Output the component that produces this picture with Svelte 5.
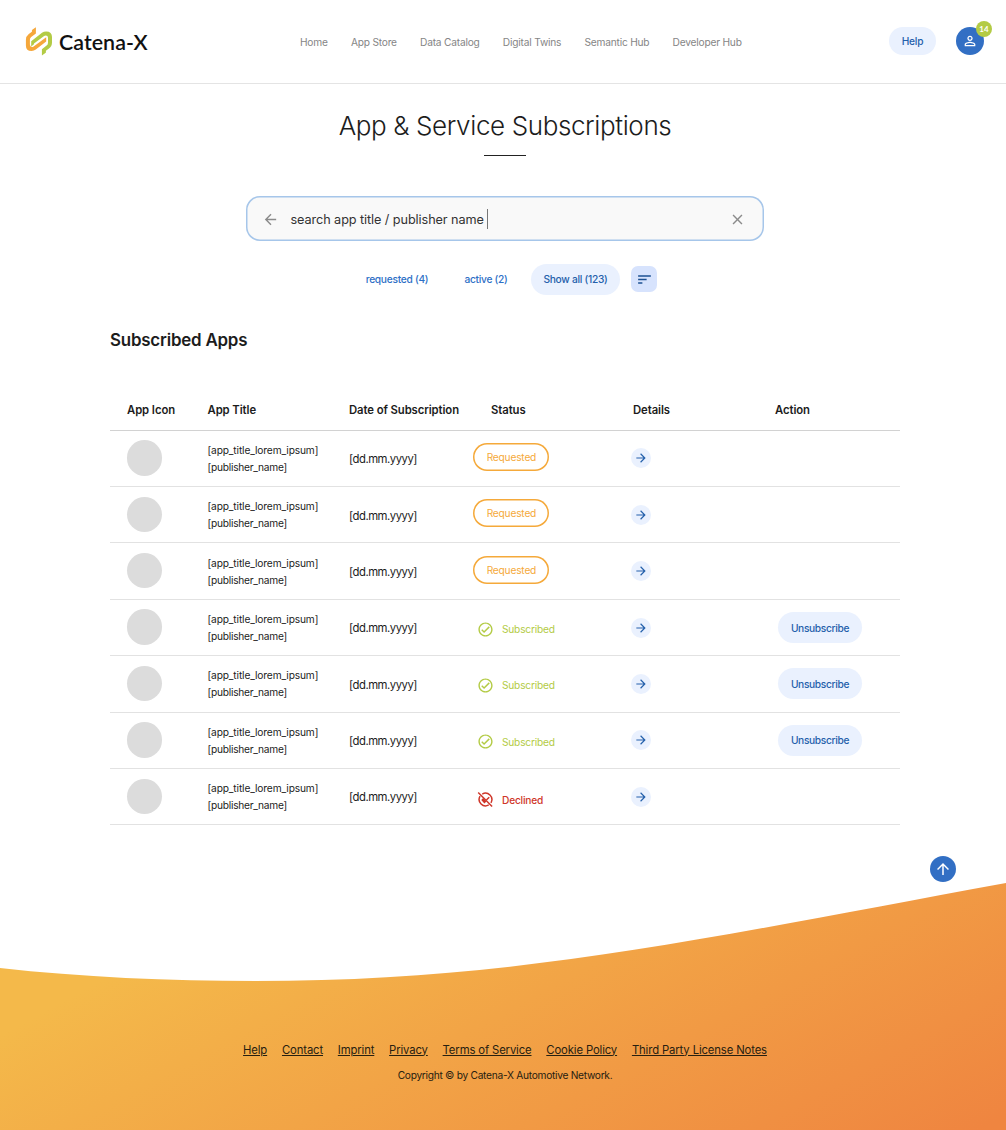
<script>
  const nav = ['Home', 'App Store', 'Data Catalog', 'Digital Twins', 'Semantic Hub', 'Developer Hub'];
  const columns = ['App Icon', 'App Title', 'Date of Subscription', 'Status', 'Details', 'Action'];
  const rows = ['requested', 'requested', 'requested', 'subscribed', 'subscribed', 'subscribed', 'declined'];
  const links = ['Help', 'Contact', 'Imprint', 'Privacy', 'Terms of Service', 'Cookie Policy', 'Third Party License Notes'];
</script>

<div class="page">
  <header>
    <div class="brand">
      <svg width="28" height="29" viewBox="0 0 28 29">
        <path d="M10.9 .2V6.4L6.2 10Q4.9 11 4.9 12.7V17.6Q4.9 20 7 20Q7.9 20 8.6 19.5L21.2 10.3V14.6L10.8 22.6Q9 24 6.6 24Q.9 24 .9 18.4V13Q.9 9.3 3.8 7.1L6.9 4.8V3.6Q6.9 2.9 7.6 2.4Z" fill="#f5a73b" />
        <path d="M16.9 28.6V22.2L21.6 18.6Q23 17.5 23 15.7V10.8Q23 8.4 20.8 8.4Q19.9 8.4 19.1 9L9 16.4V17.3L6.2 19.4V14.2L17 5.8Q18.8 4.4 21.2 4.4Q27 4.4 27 10V15.4Q27 19.2 24 21.5L20.9 23.8V25.2Q20.9 25.7 20.4 26.1Z" fill="#b3cb45" />
      </svg>
      <span>Catena-X</span>
    </div>
    <nav>{#each nav as n}<a href="#top">{n}</a>{/each}</nav>
    <div class="account">
      <button class="help">Help</button>
      <div class="avatar">
        <svg width="16" height="16" viewBox="0 0 24 24" fill="#fff"><path d="M12 5.9a2.1 2.1 0 1 1 0 4.2 2.1 2.1 0 0 1 0-4.2m0 9c2.97 0 6.1 1.46 6.1 2.1v1.1H5.9V17c0-.64 3.13-2.1 6.1-2.1M12 4C9.79 4 8 5.79 8 8s1.79 4 4 4 4-1.79 4-4-1.79-4-4-4m0 9c-2.67 0-8 1.34-8 4v3h16v-3c0-2.66-5.33-4-8-4" /></svg>
        <span class="badge">14</span>
      </div>
    </div>
  </header>

  <main>
    <h1>App &amp; Service Subscriptions</h1>
    <div class="rule"></div>
    <div class="search">
      <svg width="17" height="17" viewBox="0 0 24 24" fill="#8b8b8b"><path d="M20 11H7.83l5.59-5.59L12 4l-8 8 8 8 1.41-1.41L7.83 13H20z" /></svg>
      <span class="query">search app title / publisher name</span>
      <span class="caret"></span>
      <svg class="clear" width="17" height="17" viewBox="0 0 24 24" fill="#8b8b8b"><path d="M19 6.41 17.59 5 12 10.59 6.41 5 5 6.41 10.59 12 5 17.59 6.41 19 12 13.41 17.59 19 19 17.59 13.41 12z" /></svg>
    </div>
    <div class="filters">
      <button class="f1">requested (4)</button>
      <button class="f2">active (2)</button>
      <button class="on">Show all (123)</button>
      <button class="sort" aria-label="Sort">
        <svg width="17" height="17" viewBox="0 0 24 24" fill="#1e5192"><path d="M3 18h6v-2H3zM3 6v2h18V6zm0 7h12v-2H3z" /></svg>
      </button>
    </div>

    <section>
      <h2>Subscribed Apps</h2>
      <div class="row head">{#each columns as c}<div>{c}</div>{/each}</div>
      {#each rows as status}
        <div class="row">
          <div><span class="dot"></span></div>
          <div class="title"><span>[app_title_lorem_ipsum]</span><span class="pub">[publisher_name]</span></div>
          <div class="date">[dd.mm.yyyy]</div>
          <div class="status">
            {#if status === 'requested'}
              <span class="chip">Requested</span>
            {:else if status === 'subscribed'}
              <span class="state ok">
                <svg width="17" height="17" viewBox="0 0 24 24" fill="currentColor"><path d="M12 2C6.48 2 2 6.48 2 12s4.48 10 10 10 10-4.48 10-10S17.52 2 12 2m0 18c-4.41 0-8-3.59-8-8s3.59-8 8-8 8 3.59 8 8-3.59 8-8 8m4.59-12.42L10 14.17l-2.59-2.58L6 13l4 4 8-8z" /></svg>
                Subscribed
              </span>
            {:else}
              <span class="state no">
                <svg width="17" height="17" viewBox="0 0 24 24" fill="none" stroke="currentColor" stroke-width="2.1">
                  <path d="M7.4 4.3A9 9 0 0 1 19.7 16.6M16.6 19.7A9 9 0 0 1 4.3 7.4" />
                  <path d="M1.7 2.2 21.3 21.8" />
                  <path d="m13.2 12.8 4.1-4.1" />
                  <path d="m6 12.6 2.6-2.6 4.8 4.8L10.4 17.6Z" fill="currentColor" stroke="none" />
                </svg>
                Declined
              </span>
            {/if}
          </div>
          <div class="details"><button class="go" aria-label="Details">
            <svg width="14" height="14" viewBox="0 0 24 24" fill="#2460ab"><path d="m12 4-1.41 1.41L16.17 11H4v2h12.17l-5.58 5.59L12 20l8-8z" /></svg>
          </button></div>
          <div class="action">{#if status === 'subscribed'}<button class="unsub">Unsubscribe</button>{/if}</div>
        </div>
      {/each}
    </section>
  </main>

  <button class="up" aria-label="Back to top">
    <svg width="18" height="18" viewBox="0 0 24 24" fill="#fff"><path d="m4 12 1.41 1.41L11 7.83V20h2V7.83l5.58 5.59L20 12l-8-8z" /></svg>
  </button>

  <footer>
    <svg class="wave" width="1006" height="248" viewBox="0 0 1006 248">
      <defs>
        <linearGradient id="glow" gradientUnits="userSpaceOnUse" x1="90" y1="104" x2="354" y2="588">
          <stop offset="0" stop-color="#f4b94a" />
          <stop offset="1" stop-color="#ef8540" />
        </linearGradient>
      </defs>
      <path d="M0 86C80 95 170 99 255 99C520 99 710 55 1006 1V248H0Z" fill="url(#glow)" />
    </svg>
    <div class="links">{#each links as l}<a href="#top">{l}</a>{/each}</div>
    <p>Copyright © by Catena-X Automotive Network.</p>
  </footer>
</div>

<style>
  :global(body) { margin: 0; background: #fff; }
  * { box-sizing: border-box; }
  .page { width: 1006px; height: 1130px; overflow: hidden; display: flex; flex-direction: column; font-family: Inter, "Liberation Sans", sans-serif; color: #1c1c1c; }
  button { border: 0; padding: 0; font: inherit; color: inherit; letter-spacing: inherit; display: flex; align-items: center; justify-content: center; background: none; white-space: nowrap; }
  svg { display: block; flex: none; }
  header { height: 84px; flex: none; border-bottom: 1px solid #e4e4e4; display: grid; grid-template-columns: 300px 1fr 117px; }
  .brand { display: flex; padding: 27px 0 0 25px; gap: 6px; }
  .brand span { font: 600 21.4px/30px Lato, sans-serif; letter-spacing: .05px; color: #111; }
  nav { display: flex; gap: 23.2px; padding-top: 35px; }
  nav a { font-size: 10.2px; line-height: 14px; letter-spacing: -.21px; color: #858585; text-decoration: none; white-space: nowrap; }
  .account { display: flex; padding-top: 27px; gap: 20px; }
  .help { width: 47px; height: 28px; border-radius: 14px; background: #eaf1fe; color: #2460ab; font-size: 10.2px; font-weight: 500; letter-spacing: -.2px; }
  .avatar { width: 28px; height: 28px; border-radius: 50%; background: #326fc4; display: flex; align-items: center; justify-content: center; position: relative; }
  .badge { position: absolute; left: 20px; top: -6px; width: 16px; height: 16px; border-radius: 50%; background: #b3cb45; color: #fff; font: 700 8px/16px Lato, sans-serif; text-align: center; }
  main { display: flex; flex-direction: column; align-items: center; padding-left: 4px; }
  h1 { margin: 23px 0 0; font-size: 26px; line-height: 38px; font-weight: 300; height: 38px; letter-spacing: -.38px; white-space: nowrap; }
  .rule { width: 42px; height: 1.5px; background: #222; margin-top: 9.5px; }
  .search { width: 518px; height: 45px; margin: 40px 0 0 0; box-shadow: inset 0 0 0 1.5px #a6c6ea; border-radius: 14px; background: #f9f9f9; display: flex; align-items: center; padding: 1px 18px 0 16px; }
  .query { margin-left: 11.5px; font-size: 12.7px; letter-spacing: -.09px; color: #333; white-space: nowrap; }
  .caret { width: 1px; height: 20px; background: #777; margin-left: 3px; }
  .clear { margin-left: auto; }
  .filters { display: flex; align-items: center; margin: 22.5px 0 0 13px; height: 31px; font-size: 10.2px; font-weight: 500; letter-spacing: -.27px; color: #2d6fc6; }
  .f1 { width: 62px; }
  .f2 { width: 42px; margin-left: 37px; }
  .on { width: 89px; height: 31px; border-radius: 16px; background: #eaf1fe; color: #2460ab; margin-left: 24px; }
  .sort { width: 26px; height: 26px; border-radius: 7px; background: #d7e3fd; margin-left: 11px; }
  section { width: 790px; margin-top: 32px; }
  h2 { margin: 0; font-size: 16.9px; line-height: 26px; font-weight: 600; letter-spacing: -.2px; }
  .row { display: grid; grid-template-columns: 80.5px 141.5px 142px 142px 142px 142px; height: 56.4px; border-bottom: 1px solid #e2e2e2; }
  .row > div { display: flex; align-items: center; padding-left: 17px; white-space: nowrap; }
  .row.head { margin-top: 37px; height: 41.2px; border-color: #d2d2d2; font-size: 11.3px; font-weight: 600; letter-spacing: -.08px; }
  .row.head > div { padding-top: 1px; }
  .dot { width: 35.4px; height: 35.4px; border-radius: 50%; background: #dcdcdc; margin-bottom: 1px; }
  .row > .title { flex-direction: column; align-items: flex-start; justify-content: center; padding-top: 1px; font-size: 10.2px; line-height: 17px; letter-spacing: -.14px; }
  .title .pub { letter-spacing: -.25px; }
  .row > .date { font-size: 11.3px; letter-spacing: -.48px; padding-top: 1.5px; }
  .row > .status { padding-left: 0; padding-bottom: 3px; }
  .chip { width: 76px; height: 28px; margin-left: -.6px; box-shadow: inset 0 0 0 1.5px #f5a93a; border-radius: 14px; color: #f5a93a; font-size: 10.2px; letter-spacing: -.2px; display: flex; align-items: center; justify-content: center; }
  .state { display: flex; align-items: center; gap: 8px; padding: 6px 0 0 3px; font-size: 10.2px; letter-spacing: -.22px; }
  .ok { color: #b3cb45; }
  .no { color: #cf3629; font-weight: 500; padding-top: 9px; }
  .row > .details { padding-left: 15px; }
  .go { width: 20px; height: 20px; border-radius: 50%; background: #eaf1fe; }
  .row > .action { padding-left: 20px; }
  .unsub { width: 84px; height: 31px; border-radius: 16px; background: #eaf1fe; color: #2460ab; font-size: 10.2px; font-weight: 500; letter-spacing: -.34px; }
  .up { width: 26px; height: 26px; border-radius: 50%; background: #326fc4; align-self: flex-end; margin: 30.5px 50px 0 0; flex: none; }
  footer { display: grid; flex: none; height: 248px; grid-template-rows: 160.6px 25.4px 1fr; justify-items: center; }
  .wave { grid-area: 1 / 1 / 4 / 2; }
  .links { grid-area: 2 / 1; display: flex; gap: 14.8px; padding-left: 4px; font-size: 11.3px; line-height: 15px; letter-spacing: -.13px; z-index: 1; }
  .links a { color: #272010; white-space: nowrap; }
  p { grid-area: 3 / 1; margin: 0; padding-left: 4px; font-size: 10.2px; line-height: 14px; letter-spacing: -.28px; z-index: 1; color: #272010; }
</style>
